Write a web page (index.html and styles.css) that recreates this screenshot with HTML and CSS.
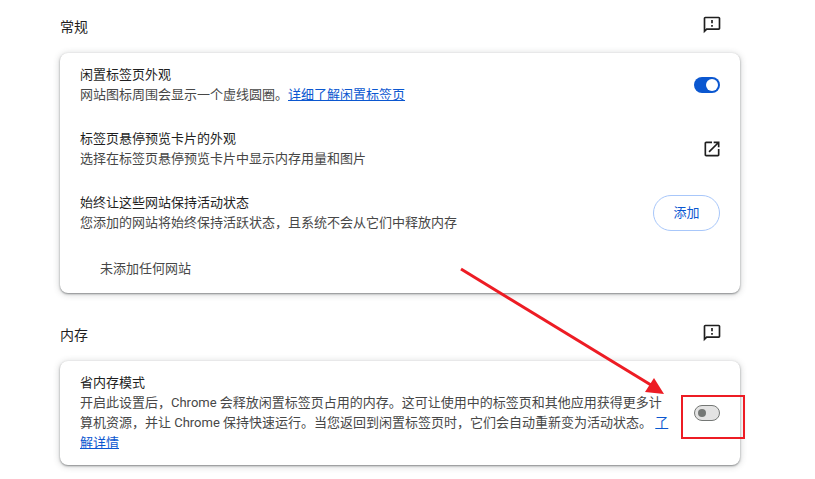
FILE: index.html
```html
<!DOCTYPE html>
<html lang="zh-CN">
<head>
<meta charset="utf-8">
<title>性能设置</title>
<link rel="stylesheet" href="styles.css">
</head>
<body>
<main class="page">
  <section class="section">
    <header class="section-head">
      <h2 class="section-title">常规</h2>
      <svg class="icon" viewBox="0 0 24 24"><path d="M20 2H4c-1.1 0-2 .9-2 2v18l4-4h14c1.1 0 2-.9 2-2V4c0-1.1-.9-2-2-2zm0 14H5.17L4 17.17V4h16v12zM11 12h2v2h-2zm0-6h2v4h-2z"/></svg>
    </header>
    <div class="card">
      <div class="row">
        <div class="row-text">
          <div class="row-title">闲置标签页外观</div>
          <div class="row-sub">网站图标周围会显示一个虚线圆圈。<a class="link" href="#">详细了解闲置标签页</a></div>
        </div>
        <span class="toggle toggle-on"><span class="knob"></span></span>
      </div>
      <div class="row">
        <div class="row-text">
          <div class="row-title">标签页悬停预览卡片的外观</div>
          <div class="row-sub">选择在标签页悬停预览卡片中显示内存用量和图片</div>
        </div>
        <svg class="icon icon-row" viewBox="0 0 24 24"><path d="M19 19H5V5h7V3H5c-1.11 0-2 .9-2 2v14c0 1.1.89 2 2 2h14c1.1 0 2-.9 2-2v-7h-2v7zM14 3v2h3.59l-9.83 9.83 1.41 1.41L19 6.41V10h2V3h-7z"/></svg>
      </div>
      <div class="row">
        <div class="row-text">
          <div class="row-title">始终让这些网站保持活动状态</div>
          <div class="row-sub">您添加的网站将始终保持活跃状态，且系统不会从它们中释放内存</div>
        </div>
        <button class="add-btn" type="button">添加</button>
      </div>
      <div class="empty-row">未添加任何网站</div>
    </div>
  </section>
  <section class="section section-next">
    <header class="section-head">
      <h2 class="section-title">内存</h2>
      <svg class="icon" viewBox="0 0 24 24"><path d="M20 2H4c-1.1 0-2 .9-2 2v18l4-4h14c1.1 0 2-.9 2-2V4c0-1.1-.9-2-2-2zm0 14H5.17L4 17.17V4h16v12zM11 12h2v2h-2zm0-6h2v4h-2z"/></svg>
    </header>
    <div class="card">
      <div class="row row-tall">
        <div class="row-text row-text-wrap">
          <div class="row-title">省内存模式</div>
          <div class="row-sub">开启此设置后，Chrome 会释放闲置标签页占用的内存。这可让使用中的标签页和其他应用获得更多计算机资源，并让 Chrome 保持快速运行。当您返回到闲置标签页时，它们会自动重新变为活动状态。 <a class="link" href="#">了解详情</a></div>
        </div>
        <span class="toggle toggle-off"><span class="knob"></span></span>
      </div>
    </div>
  </section>
</main>
<svg class="annotation" viewBox="0 0 815 479" width="815" height="479">
  <line class="arrow-line" x1="461" y1="269" x2="651" y2="385"/>
  <polygon class="arrow-head" points="664,394 645,392 654,378"/>
  <rect class="arrow-box" x="682" y="396" width="62" height="42"/>
</svg>
</body>
</html>
```
FILE: styles.css
```css
* { box-sizing: border-box; }
html, body { margin: 0; padding: 0; background: #fff; }
body {
  position: relative;
  width: 815px;
  height: 479px;
  overflow: hidden;
  font-family: Roboto, "Noto Sans CJK SC", sans-serif;
  font-size: 13px;
  line-height: 20px;
  color: #1f1f1f;
}
.page { width: 680px; margin-left: 60px; }
.section-next { margin-top: 15px; }
.section-head {
  display: flex;
  justify-content: space-between;
  align-items: flex-start;
  height: 53px;
  padding: 15px 18px 0 0;
}
.section-title {
  margin: 2px 0 0;
  font-size: 14px;
  font-weight: 400;
  line-height: 20px;
}
.icon { display: block; width: 20px; height: 20px; fill: #1f1f1f; flex: none; }
.icon-row { margin-right: -2px; }
.card {
  background: #fff;
  border-radius: 8px;
  box-shadow: 0 1px 2px rgba(60, 64, 67, .55), 0 1px 6px 1px rgba(60, 64, 67, .2);
}
.row {
  display: flex;
  justify-content: space-between;
  align-items: center;
  height: 64px;
  padding: 0 20px;
}
.row-tall { height: 104px; }
.row-text-wrap { width: 590px; }
.row-title { color: #1f1f1f; }
.row-sub { color: #474747; }
.link { color: #0b57d0; text-decoration: underline; }
.empty-row { height: 48px; padding: 14px 40px; color: #474747; }
.toggle {
  display: flex;
  align-items: center;
  flex: none;
  width: 26px;
  height: 16px;
  border-radius: 8px;
}
.toggle-on { background: #0b57d0; justify-content: flex-end; padding-right: 2px; }
.toggle-on .knob { width: 12px; height: 12px; border-radius: 50%; background: #fff; }
.toggle-off { background: #e3e3e3; border: 1px solid #747775; padding-left: 3px; }
.toggle-off .knob { width: 8px; height: 8px; border-radius: 50%; background: #747775; }
.add-btn {
  flex: none;
  width: 67px;
  height: 36px;
  background: #fff;
  border: 1px solid #a8c7fa;
  border-radius: 18px;
  color: #0b57d0;
  font: inherit;
  padding: 0;
}
.annotation { position: absolute; left: 0; top: 0; pointer-events: none; }
.arrow-line { stroke: #ed1c24; stroke-width: 3; }
.arrow-head { fill: #ed1c24; }
.arrow-box { fill: none; stroke: #ed1c24; stroke-width: 2; }
```
